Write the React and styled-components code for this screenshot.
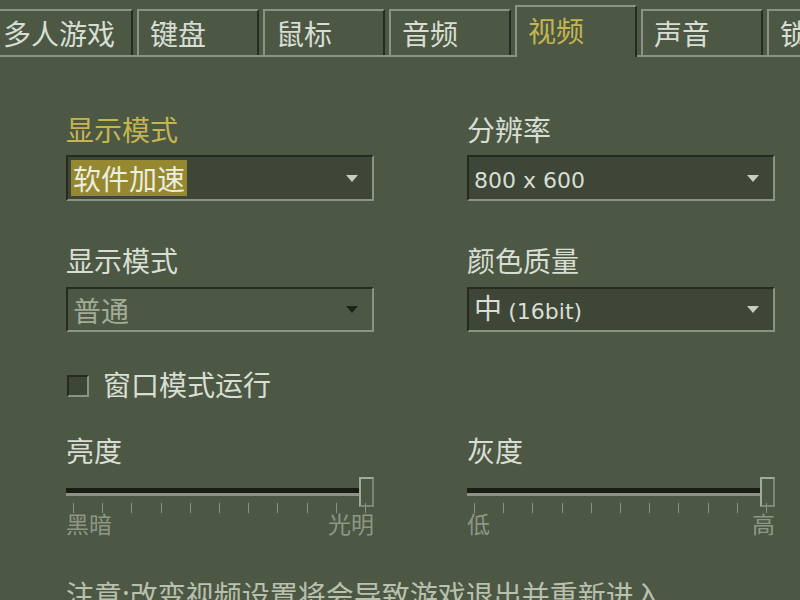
import React from "react";
import styled, { createGlobalStyle } from "styled-components";

const BG = "#4c5844";
const FIELD = "#3e4637";
const LIGHT = "#8c9284";
const DARK = "#262b21";
const TEXT = "#d8ded3";
const GOLD = "#c4b550";

const GlobalStyle = createGlobalStyle`
  html, body {
    margin: 0;
    height: 100%;
    overflow: hidden;
    background: ${BG};
  }
  body {
    font-family: "Noto Sans CJK SC", "Noto Sans", sans-serif;
    color: ${TEXT};
  }
`;

const Page = styled.div`
  width: 800px;
  height: 600px;
  overflow: hidden;
`;

const TabRow = styled.div`
  display: flex;
  align-items: flex-end;
  gap: 4px;
  margin: 5px 0 0 -10px;
  border-bottom: 2px solid ${LIGHT};
`;

const Tab = styled.div`
  box-sizing: border-box;
  flex: none;
  min-width: 122px;
  height: ${(p) => (p.active ? "52px" : "46px")};
  margin-bottom: ${(p) => (p.active ? "-2px" : "0")};
  padding: ${(p) => (p.active ? "0 16px 4px 11px" : "0 16px 0 11px")};
  display: flex;
  align-items: center;
  background: ${BG};
  border-top: 2px solid ${LIGHT};
  border-left: 2px solid ${LIGHT};
  border-right: 2px solid ${DARK};
  color: ${(p) => (p.active ? GOLD : TEXT)};
  font-size: 28px;
  line-height: 34px;
  white-space: nowrap;
`;

const Content = styled.div`
  padding: 55px 0 0 66px;
  display: grid;
  grid-template-columns: 308px 308px;
  column-gap: 93px;
`;

const Field = styled.div`
  display: flex;
  flex-direction: column;
  margin-bottom: ${(p) => p.after || 0}px;
`;

const Label = styled.div`
  font-size: 28px;
  line-height: 34px;
  color: ${(p) => (p.gold ? GOLD : TEXT)};
  margin-bottom: ${(p) => p.gap || 0}px;
  white-space: nowrap;
`;

const Combo = styled.div`
  box-sizing: border-box;
  height: ${(p) => p.h || 46}px;
  display: flex;
  align-items: center;
  justify-content: space-between;
  padding: 0 14px 0 3px;
  background: ${(p) => (p.disabled ? BG : FIELD)};
  border-style: solid;
  border-width: 2px;
  border-color: ${DARK} ${LIGHT} ${LIGHT} ${DARK};
`;

const Value = styled.span`
  font-size: 28px;
  line-height: 36px;
  padding: 0 2px;
  white-space: nowrap;
  color: ${(p) => (p.disabled ? "#a2ab97" : p.selected ? "#eceedf" : TEXT)};
  background: ${(p) => (p.selected ? "#958831" : "transparent")};
`;

const Latin = styled.span`
  font-family: "DejaVu Sans", "Noto Sans CJK SC", sans-serif;
  font-size: 22px;
`;

const Arrow = styled.span`
  width: 0;
  height: 0;
  border-left: 6px solid transparent;
  border-right: 6px solid transparent;
  border-top: 7px solid ${(p) => (p.disabled ? "#1e2219" : "#c8cdc2")};
`;

const CheckRow = styled.div`
  grid-column: 1 / 3;
  display: flex;
  align-items: center;
  gap: 14px;
  height: 34px;
  margin: 35px 0 32px;
`;

const Box = styled.span`
  box-sizing: border-box;
  width: 22px;
  height: 22px;
  margin: 4px 0 0 1px;
  background: ${FIELD};
  border: 2px solid;
  border-color: ${DARK} ${LIGHT} ${LIGHT} ${DARK};
`;

const SliderBar = styled.div`
  display: flex;
  align-items: center;
  height: 30px;
  margin-top: 10px;
`;

const Track = styled.div`
  flex: 1;
  height: 5px;
  background: #1a1d16;
  border-bottom: 3px solid ${LIGHT};
`;

const Thumb = styled.div`
  box-sizing: border-box;
  width: 15px;
  height: 30px;
  background: ${BG};
  border: 2px solid #a3aa99;
  border-right-color: #7e8575;
  border-bottom-color: #7e8575;
`;

const Ticks = styled.div`
  display: flex;
  justify-content: space-between;
  height: 10px;
  margin-top: -4px;
  padding: 0 8px 0 7px;
`;

const Tick = styled.span`
  width: 1px;
  background: ${LIGHT};
`;

const Ends = styled.div`
  display: flex;
  justify-content: space-between;
  font-size: 23px;
  line-height: 28px;
  color: #8e9786;
  margin-top: -4px;
`;

const Note = styled.div`
  grid-column: 1 / 3;
  margin-top: 40px;
  font-size: 28px;
  line-height: 34px;
  color: #b8c0ae;
  white-space: nowrap;
`;

const tabs = ["多人游戏", "键盘", "鼠标", "音频", "视频", "声音", "锁定"];

const Slider = ({ title, low, high }) => (
  <Field>
    <Label>{title}</Label>
    <SliderBar>
      <Track />
      <Thumb />
    </SliderBar>
    <Ticks>
      {Array.from({ length: 11 }).map((_, i) => (
        <Tick key={i} />
      ))}
    </Ticks>
    <Ends>
      <span>{low}</span>
      <span>{high}</span>
    </Ends>
  </Field>
);

export default function App() {
  return (
    <Page>
      <GlobalStyle />
      <TabRow>
        {tabs.map((t) => (
          <Tab key={t} active={t === "视频"}>
            {t}
          </Tab>
        ))}
      </TabRow>

      <Content>
        <Field after={42}>
          <Label gold gap={9}>显示模式</Label>
          <Combo>
            <Value selected>软件加速</Value>
            <Arrow />
          </Combo>
        </Field>
        <Field after={42}>
          <Label gap={9}>分辨率</Label>
          <Combo>
            <Value>
              <Latin>800 x 600</Latin>
            </Value>
            <Arrow />
          </Combo>
        </Field>

        <Field>
          <Label gap={10}>显示模式</Label>
          <Combo h={45} disabled>
            <Value disabled>普通</Value>
            <Arrow disabled />
          </Combo>
        </Field>
        <Field>
          <Label gap={10}>颜色质量</Label>
          <Combo h={45}>
            <Value>
              中 <Latin>(16bit)</Latin>
            </Value>
            <Arrow />
          </Combo>
        </Field>

        <CheckRow>
          <Box />
          <Label>窗口模式运行</Label>
        </CheckRow>

        <Slider title="亮度" low="黑暗" high="光明" />
        <Slider title="灰度" low="低" high="高" />

        <Note>注意:改变视频设置将会导致游戏退出并重新进入</Note>
      </Content>
    </Page>
  );
}
